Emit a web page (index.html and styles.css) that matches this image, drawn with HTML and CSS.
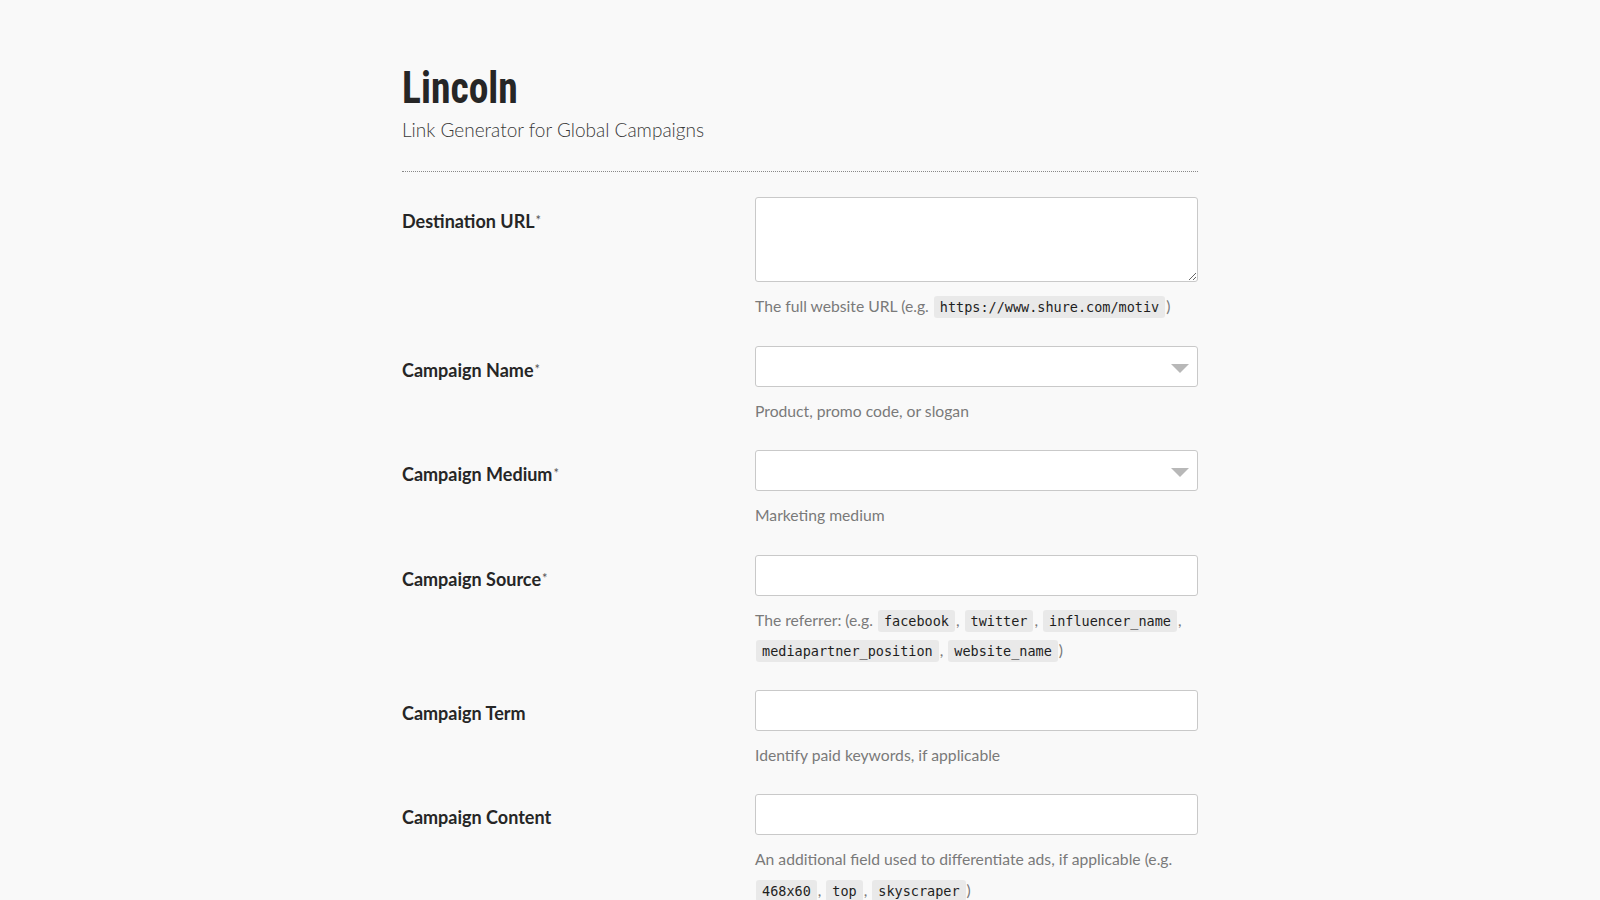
FILE: index.html
```html
<!DOCTYPE html>
<html lang="en">
<head>
<meta charset="utf-8">
<title>Lincoln</title>
<link rel="stylesheet" href="styles.css">
</head>
<body>
<main class="page">
  <header class="header">
    <h1 class="title"><span class="title-text">Lincoln</span></h1>
    <p class="subtitle">Link Generator for Global Campaigns</p>
  </header>
  <form class="form">
    <div class="row">
      <label class="label">Destination URL<span class="req">*</span></label>
      <div class="field">
        <textarea class="control textarea"></textarea>
        <p class="help">The full website URL (e.g. <code>https://www.shure.com/motiv</code>)</p>
      </div>
    </div>
    <div class="row">
      <label class="label">Campaign Name<span class="req">*</span></label>
      <div class="field">
        <div class="control select"><span class="arrow"></span></div>
        <p class="help">Product, promo code, or slogan</p>
      </div>
    </div>
    <div class="row">
      <label class="label">Campaign Medium<span class="req">*</span></label>
      <div class="field">
        <div class="control select"><span class="arrow"></span></div>
        <p class="help">Marketing medium</p>
      </div>
    </div>
    <div class="row">
      <label class="label">Campaign Source<span class="req">*</span></label>
      <div class="field">
        <input class="control input" type="text">
        <p class="help">The referrer: (e.g. <code>facebook</code>, <code>twitter</code>, <code>influencer_name</code>, <code>mediapartner_position</code>, <code>website_name</code>)</p>
      </div>
    </div>
    <div class="row">
      <label class="label">Campaign Term</label>
      <div class="field">
        <input class="control input" type="text">
        <p class="help">Identify paid keywords, if applicable</p>
      </div>
    </div>
    <div class="row">
      <label class="label">Campaign Content</label>
      <div class="field">
        <input class="control input" type="text">
        <p class="help">An additional field used to differentiate ads, if applicable (e.g. <code>468x60</code>, <code>top</code>, <code>skyscraper</code>)</p>
      </div>
    </div>
  </form>
</main>
</body>
</html>
```

FILE: styles.css
```css
html, body {
  margin: 0;
  padding: 0;
  background: #f9f9f9;
}
body {
  font-family: Lato, "Liberation Sans", sans-serif;
  color: #2a2a2a;
}
.page {
  width: 796px;
  margin: 0 auto;
  padding-top: 62px;
}
.header {
  border-bottom: 1px dotted #888;
  padding-bottom: 28px;
  margin-bottom: 25px;
}
.title {
  margin: 0;
  font-family: "Roboto Condensed", "Liberation Sans Narrow", "DejaVu Sans Condensed", "Liberation Sans", sans-serif;
  font-weight: 700;
  font-size: 44px;
  line-height: 52px;
  color: #262626;
}
.title-text {
  display: inline-block;
  transform: scaleX(0.9);
  transform-origin: left center;
  letter-spacing: 0;
}
.subtitle {
  margin: 3px 0 0;
  font-size: 19px;
  font-weight: 300;
  line-height: 26px;
  color: #3a3a3a;
}
.form {
  display: flex;
  flex-direction: column;
}
.row {
  display: grid;
  grid-template-columns: 353px 1fr;
  margin-bottom: 24px;
}
.label {
  font-size: 18px;
  font-weight: 700;
  line-height: 30px;
  padding-top: 8px;
  color: #262626;
}
.req {
  font-size: 13px;
  font-weight: 400;
  vertical-align: 3px;
  margin-left: 1px;
  color: #555;
}
.field {
  display: flex;
  flex-direction: column;
  min-width: 0;
}
.control {
  box-sizing: border-box;
  display: block;
  width: 100%;
  margin: 0;
  background: #fff;
  border: 1px solid #c9c9c9;
  border-radius: 3px;
}
.textarea {
  height: 85px;
  resize: vertical;
  font: inherit;
}
.input, .select {
  height: 41px;
}
.select {
  position: relative;
}
.arrow {
  position: absolute;
  right: 8px;
  top: 17px;
  width: 0;
  height: 0;
  border-left: 9px solid transparent;
  border-right: 9px solid transparent;
  border-top: 9px solid #b8b8b8;
}
.help {
  margin: 9px 0 0;
  font-size: 15.7px;
  font-weight: 400;
  line-height: 30.5px;
  color: #7a7a7a;
}
code {
  font-family: "DejaVu Sans Mono", "Liberation Mono", monospace;
  font-size: 13.5px;
  line-height: 1;
  color: #1e1e1e;
  background: #e9e9e9;
  border-radius: 3px;
  padding: 3px 6px 3px;
  margin: 0 1px;
}
```
